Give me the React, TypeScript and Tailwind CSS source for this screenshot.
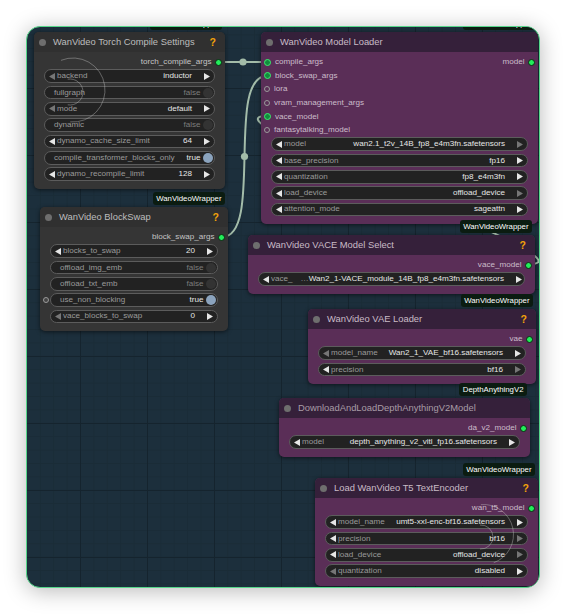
import React from 'react';

// --- TYPES ---
type Slot = { name: string; on?: boolean };

type Widget =
  | { t: 'combo'; label: string; value: string; dl?: boolean; dr?: boolean; cut?: boolean }
  | { t: 'toggle'; label: string; value: boolean; input?: boolean };

interface NodeProps {
  pos: string;
  purple?: boolean;
  title: string;
  dimTitle?: boolean;
  help?: boolean;
  inputs?: Slot[];
  outputs?: Slot[];
  widgets: Widget[];
  badge: string;
}

// --- SMALL PARTS ---
function Arrow({ dir, dim }: { dir: 'l' | 'r'; dim?: boolean }) {
  return (
    <svg width="6" height="7" viewBox="0 0 6 7" className="shrink-0">
      <path d={dir === 'l' ? 'M6 0L0 3.5L6 7Z' : 'M0 0L6 3.5L0 7Z'} fill={dim ? '#767676' : '#e6e6e6'} />
    </svg>
  );
}

function InDot({ on }: { on?: boolean }) {
  if (on) {
    return <span className="h-[7px] w-[7px] shrink-0 rounded-full border-[1.5px] border-[#3bf06e] bg-[#138c3e]" />;
  }
  return <span className="h-[6px] w-[6px] shrink-0 rounded-full border-[1.5px] border-[#9a9a9a]" />;
}

function OutDot() {
  return <span className="h-[7px] w-[7px] shrink-0 rounded-full border border-[#0b2a12] bg-[#22ee5a]" />;
}

function WidgetRow({ w }: { w: Widget }) {
  if (w.t === 'toggle') {
    return (
      <div className="relative">
        {w.input && (
          <span className="absolute left-[-7px] top-[3.8px] h-[6px] w-[6px] rounded-full border-[1.5px] border-[#9a9a9a] bg-[#444]" />
        )}
        <div className="flex h-[13.6px] items-center rounded-full border border-[#5c5c5c] bg-[#222] pl-[9px] pr-[1.5px]">
          <span className="text-[#9a9a9a]">{w.label}</span>
          <span className={`ml-auto mr-[2px] ${w.value ? 'text-[#e6e6e6]' : 'text-[#7c7c7c]'}`}>
            {w.value ? 'true' : 'false'}
          </span>
          <span className={`h-[10px] w-[10px] rounded-full ${w.value ? 'bg-[#8ba3bd]' : 'bg-[#333]'}`} />
        </div>
      </div>
    );
  }
  return (
    <div className="flex h-[13.6px] items-center rounded-full border border-[#5c5c5c] bg-[#222] pl-[3.5px] pr-[4px]">
      <Arrow dir="l" dim={w.dl} />
      <span className="ml-[2.5px] whitespace-nowrap text-[#9a9a9a]">{w.label}</span>
      {w.cut && <span className="ml-[8px] text-[#9a9a9a]">…</span>}
      <span className="ml-auto mr-[12px] whitespace-nowrap text-[#e6e6e6]">{w.value}</span>
      <Arrow dir="r" dim={w.dr} />
    </div>
  );
}

// --- NODE ---
function Node({ pos, purple, title, dimTitle, help, inputs = [], outputs = [], widgets, badge }: NodeProps) {
  const rows = Math.max(inputs.length, outputs.length);
  return (
    <div
      className={`absolute rounded-[5px] shadow-[0_1px_4px_rgba(0,0,0,0.55)] ${pos} ${
        purple ? 'bg-[#5a2e57]' : 'bg-[#353535]'
      }`}
    >
      <div className="absolute bottom-full right-[3px] mb-[2px] flex h-[13px] items-center rounded-[3px] bg-[#0b1c11] px-[3.5px] text-[7.8px] leading-none text-white">
        {badge}
      </div>

      <div
        className={`flex h-[20.4px] items-center rounded-t-[5px] pl-[4.5px] pr-[9px] ${
          purple ? 'bg-[#35203a]' : 'bg-[#303030]'
        }`}
      >
        <span className="h-[7px] w-[7px] rounded-full bg-[#6e6e6e]" />
        <span
          className={`ml-[7.5px] whitespace-nowrap text-[9.4px] leading-none ${
            dimTitle ? 'text-[#a89ca6]' : purple ? 'text-[#c9bcc7]' : 'text-[#bdbdbd]'
          }`}
        >
          {title}
        </span>
        {help && <span className="ml-auto text-[10.5px] font-bold leading-none text-[#f2a20a]">?</span>}
      </div>

      <div className="pb-[8px] pt-[3px] text-[8.1px] leading-none">
        {Array.from({ length: rows }).map((_, i) => (
          <div key={i} className="flex h-[13.6px] items-center">
            {inputs[i] && (
              <div className="flex items-center gap-[4px] pl-[3px]">
                <InDot on={inputs[i].on} />
                <span className={purple ? 'text-[#cbbdca]' : 'text-[#c4c4c4]'}>{inputs[i].name}</span>
              </div>
            )}
            {outputs[i] && (
              <div className="ml-auto flex items-center gap-[3.5px] pr-[3px]">
                <span className={purple ? 'text-[#cbbdca]' : 'text-[#c4c4c4]'}>{outputs[i].name}</span>
                <OutDot />
              </div>
            )}
          </div>
        ))}
        <div className="mt-[0.5px] flex flex-col gap-[2.72px] px-[10px]">
          {widgets.map((w, i) => (
            <WidgetRow key={i} w={w} />
          ))}
        </div>
      </div>
    </div>
  );
}

// --- LINKS + OVERLAY ---
function arc(cx: number, cy: number, r: number, a0: number, a1: number) {
  const rad = (d: number) => (d * Math.PI) / 180;
  const x0 = cx + r * Math.cos(rad(a0));
  const y0 = cy + r * Math.sin(rad(a0));
  const x1 = cx + r * Math.cos(rad(a1));
  const y1 = cy + r * Math.sin(rad(a1));
  return `M${x0} ${y0}A${r} ${r} 0 ${a1 - a0 > 180 ? 1 : 0} 1 ${x1} ${y1}`;
}

function Links() {
  return (
    <svg className="absolute inset-0" width="512" height="560">
      <g stroke="#a3bca9" strokeWidth="2" fill="none">
        <path d="M191 35L240 35" />
        <path d="M195 210C237 210 198 49 240 49" />
        <path d="M502.5 237C577 237 165 89 240 89" />
      </g>
      <circle cx="216" cy="35" r="3.6" fill="#a3bca9" />
      <circle cx="217.5" cy="129.5" r="3.6" fill="#a3bca9" />
    </svg>
  );
}

function Swirl() {
  return (
    <svg className="pointer-events-none absolute inset-0" width="512" height="560">
      <g stroke="rgba(200,200,200,0.45)" strokeWidth="0.9" fill="none">
        <path d={arc(46, 63, 32, -112, 95)} />
        <path d={arc(43, 65, 13, -100, 100)} />
        <path d={arc(456.5, 507.5, 30, -95, 70)} />
        <path d={arc(454, 510, 12, -95, 95)} />
      </g>
    </svg>
  );
}

// ===================================================================
// ==                            APP                                ==
// ===================================================================
export default function App() {
  return (
    <div className="h-[615px] w-[566px] bg-white pl-[26px] pt-[26px] font-['Liberation_Sans',Arial,sans-serif]">
      <div className="relative h-[562px] w-[514px] overflow-hidden rounded-[14px] border border-[#56d68a] bg-[#1c2f3c] shadow-[0_3px_22px_rgba(0,0,0,0.28)] [background-image:linear-gradient(#15242e_1px,transparent_1px),linear-gradient(90deg,#15242e_1px,transparent_1px),linear-gradient(#1a2c37_1px,transparent_1px),linear-gradient(90deg,#1a2c37_1px,transparent_1px)] [background-position:53px_61px] [background-size:67px_67px,67px_67px,13.4px_13.4px,13.4px_13.4px]">
        <Links />

        <Node
          pos="left-[7px] top-[5px] w-[191px]"
          title="WanVideo Torch Compile Settings"
          help
          outputs={[{ name: 'torch_compile_args' }]}
          badge="WanVideoWrapper"
          widgets={[
            { t: 'combo', label: 'backend', value: 'inductor', dl: true },
            { t: 'toggle', label: 'fullgraph', value: false },
            { t: 'combo', label: 'mode', value: 'default', dl: true },
            { t: 'toggle', label: 'dynamic', value: false },
            { t: 'combo', label: 'dynamo_cache_size_limit', value: '64' },
            { t: 'toggle', label: 'compile_transformer_blocks_only', value: true },
            { t: 'combo', label: 'dynamo_recompile_limit', value: '128' },
          ]}
        />

        <Node
          pos="left-[13px] top-[180px] w-[188px]"
          title="WanVideo BlockSwap"
          help
          outputs={[{ name: 'block_swap_args' }]}
          badge="WanVideoWrapper"
          widgets={[
            { t: 'combo', label: 'blocks_to_swap', value: '20' },
            { t: 'toggle', label: 'offload_img_emb', value: false },
            { t: 'toggle', label: 'offload_txt_emb', value: false },
            { t: 'toggle', label: 'use_non_blocking', value: true, input: true },
            { t: 'combo', label: 'vace_blocks_to_swap', value: '0', dl: true },
          ]}
        />

        <Node
          pos="left-[234px] top-[5px] w-[277px]"
          purple
          title="WanVideo Model Loader"
          inputs={[
            { name: 'compile_args', on: true },
            { name: 'block_swap_args', on: true },
            { name: 'lora' },
            { name: 'vram_management_args' },
            { name: 'vace_model', on: true },
            { name: 'fantasytalking_model' },
          ]}
          outputs={[{ name: 'model' }]}
          badge="WanVideoWrapper"
          widgets={[
            { t: 'combo', label: 'model', value: 'wan2.1_t2v_14B_fp8_e4m3fn.safetensors', dr: true },
            { t: 'combo', label: 'base_precision', value: 'fp16' },
            { t: 'combo', label: 'quantization', value: 'fp8_e4m3fn' },
            { t: 'combo', label: 'load_device', value: 'offload_device', dr: true },
            { t: 'combo', label: 'attention_mode', value: 'sageattn' },
          ]}
        />

        <Node
          pos="left-[221px] top-[208px] w-[287px]"
          purple
          title="WanVideo VACE Model Select"
          help
          outputs={[{ name: 'vace_model' }]}
          badge="WanVideoWrapper"
          widgets={[{ t: 'combo', label: 'vace_', value: 'Wan2_1-VACE_module_14B_fp8_e4m3fn.safetensors', cut: true }]}
        />

        <Node
          pos="left-[281px] top-[282px] w-[228px]"
          purple
          title="WanVideo VAE Loader"
          help
          outputs={[{ name: 'vae' }]}
          badge="WanVideoWrapper"
          widgets={[
            { t: 'combo', label: 'model_name', value: 'Wan2_1_VAE_bf16.safetensors', dl: true },
            { t: 'combo', label: 'precision', value: 'bf16', dr: true },
          ]}
        />

        <Node
          pos="left-[252px] top-[371px] w-[251px]"
          purple
          dimTitle
          title="DownloadAndLoadDepthAnythingV2Model"
          outputs={[{ name: 'da_v2_model' }]}
          badge="DepthAnythingV2"
          widgets={[{ t: 'combo', label: 'model', value: 'depth_anything_v2_vitl_fp16.safetensors' }]}
        />

        <Node
          pos="left-[288px] top-[451px] w-[223px]"
          purple
          title="Load WanVideo T5 TextEncoder"
          help
          outputs={[{ name: 'wan_t5_model' }]}
          badge="WanVideoWrapper"
          widgets={[
            { t: 'combo', label: 'model_name', value: 'umt5-xxl-enc-bf16.safetensors' },
            { t: 'combo', label: 'precision', value: 'bf16', dr: true },
            { t: 'combo', label: 'load_device', value: 'offload_device', dr: true },
            { t: 'combo', label: 'quantization', value: 'disabled', dl: true },
          ]}
        />

        <Swirl />
      </div>
    </div>
  );
}
